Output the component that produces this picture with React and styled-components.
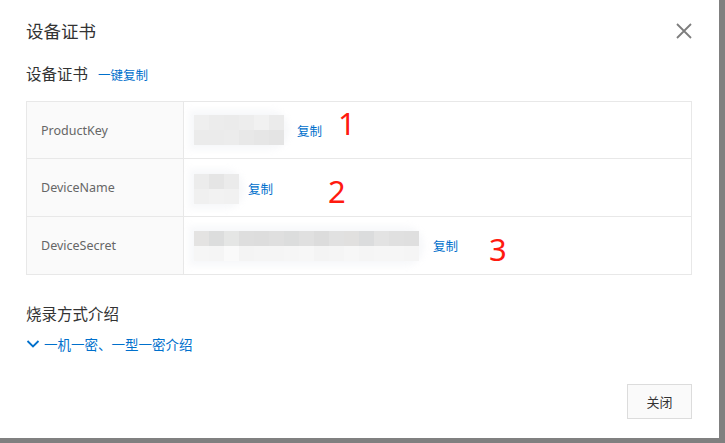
import React from "react";
import styled, { createGlobalStyle } from "styled-components";

const GlobalStyle = createGlobalStyle`
  html, body {
    margin: 0;
    padding: 0;
    background: #808080;
  }
  body {
    font-family: "Noto Sans", "Noto Sans CJK SC", sans-serif;
  }
`;

const Dialog = styled.div`
  width: 719px;
  height: 438px;
  background: #fff;
  box-sizing: border-box;
  padding: 0 27px 19px 26px;
  display: flex;
  flex-direction: column;
`;

const Header = styled.div`
  height: 62px;
  display: flex;
  align-items: center;
  justify-content: space-between;
`;

const Title = styled.div`
  font-family: "Noto Sans CJK SC", sans-serif;
  font-size: 17.5px;
  color: #333;
  line-height: 24px;
`;

const CloseIcon = styled.button`
  width: 18px;
  height: 18px;
  padding: 0;
  margin-right: -1px;
  border: none;
  background: transparent;
  display: flex;
  cursor: pointer;
`;

const SectionRow = styled.div`
  display: flex;
  align-items: baseline;
  gap: 10px;
  height: 22px;
  margin-top: ${(p) => p.top || 0}px;
`;

const SectionTitle = styled.div`
  font-family: "Noto Sans CJK SC", sans-serif;
  font-size: 15.5px;
  line-height: 22px;
  color: #333;
`;

const Link = styled.a`
  font-family: "Noto Sans CJK SC", sans-serif;
  font-size: ${(p) => p.size || 12}px;
  color: #0070cc;
  text-decoration: none;
  cursor: pointer;
  display: inline-flex;
  align-items: center;
  gap: 4px;
`;

const Table = styled.div`
  margin-top: 17px;
  border: 1px solid #e8e8e8;
`;

const Row = styled.div`
  display: flex;
  height: ${(p) => p.h}px;
  & + & {
    border-top: 1px solid #e8e8e8;
  }
`;

const Label = styled.div`
  width: 142px;
  flex-shrink: 0;
  background: #fafafa;
  border-right: 1px solid #e8e8e8;
  display: flex;
  align-items: center;
  padding-left: 14px;
  font-size: 12.5px;
  color: #666;
`;

const Value = styled.div`
  flex: 1;
  display: flex;
  align-items: center;
  padding-left: 10px;
`;

const Mosaic = styled.div`
  display: grid;
  grid-template-columns: repeat(${(p) => p.cols}, 15px);
  grid-auto-rows: 15px;
  margin-top: ${(p) => p.shift || 0}px;
  border-radius: 0 14px 14px 0;
  box-shadow: 0 0 6px 5px rgba(246, 247, 250, 0.9);
`;

const Block = styled.div`
  background: ${(p) => p.shade};
`;

const CopyLink = styled(Link)`
  font-size: 12.5px;
  margin-left: ${(p) => p.gap}px;
  margin-top: ${(p) => p.shift || 0}px;
`;

const Mark = styled.span`
  font-family: "Noto Sans", sans-serif;
  font-size: 31px;
  line-height: 1;
  color: #ff1a0f;
  margin-left: ${(p) => p.gap}px;
  transform: translateY(${(p) => p.dy}px);
`;

const Footer = styled.div`
  margin-top: auto;
  display: flex;
  justify-content: flex-end;
`;

const CloseButton = styled.button`
  width: 65px;
  height: 35px;
  background: #fafafa;
  border: 1px solid #dcdcdc;
  font-family: "Noto Sans CJK SC", sans-serif;
  font-size: 13px;
  color: #333;
  cursor: pointer;
`;

const rows = [
  {
    label: "ProductKey",
    height: 56,
    cols: 6,
    shades: [
      "#efefef", "#ececec", "#ebebeb", "#ededed", "#f1f1f1", "#ebebeb",
      "#ebebeb", "#ebebeb", "#ececec", "#e8e8e8", "#e6e6e6", "#e4e4e4",
    ],
    copyGap: 13,
    mark: "1",
    markGap: 16,
    markDy: -7,
  },
  {
    label: "DeviceName",
    height: 57,
    cols: 3,
    shades: ["#ececec", "#e5e5e5", "#ebebeb", "#f0f0f0", "#f2f2f2", "#f1f1f1"],
    copyGap: 9,
    mark: "2",
    markGap: 55,
    markDy: 4,
    shift: 2,
  },
  {
    label: "DeviceSecret",
    height: 57,
    cols: 15,
    shades: [
      "#e4e3e2", "#dcdddd", "#e5e6e5", "#dedede", "#dddddd", "#dfdfdf",
      "#dcdddd", "#e0e0e0", "#dcdcdc", "#e1e1e1", "#e1e0df", "#dbdcdd",
      "#e3e3e3", "#e0e0e0", "#dfdfdf",
      "#f6f6f6", "#f5f5f5", "#fafafa", "#f4f4f4", "#f5f5f5", "#f5f5f5",
      "#f6f6f6", "#f7f7f7", "#f4f4f4", "#f5f5f5", "#f7f7f7", "#f5f5f5",
      "#f6f6f6", "#f6f6f6", "#f5f5f5",
    ],
    copyGap: 14,
    mark: "3",
    markGap: 31,
    markDy: 4,
  },
];

function App() {
  return (
    <>
      <GlobalStyle />
      <Dialog>
        <Header>
          <Title>设备证书</Title>
          <CloseIcon aria-label="close">
            <svg width="18" height="18" viewBox="0 0 18 18">
              <path
                d="M2 2 L16 16 M16 2 L2 16"
                stroke="#7d7d7d"
                strokeWidth="1.8"
                fill="none"
              />
            </svg>
          </CloseIcon>
        </Header>

        <SectionRow>
          <SectionTitle>设备证书</SectionTitle>
          <Link size={12.5}>一键复制</Link>
        </SectionRow>

        <Table>
          {rows.map((row) => (
            <Row key={row.label} h={row.height}>
              <Label>{row.label}</Label>
              <Value>
                <Mosaic cols={row.cols} shift={row.shift}>
                  {row.shades.map((shade, i) => (
                    <Block key={i} shade={shade} />
                  ))}
                </Mosaic>
                <CopyLink gap={row.copyGap} shift={row.shift}>
                  复制
                </CopyLink>
                <Mark gap={row.markGap} dy={row.markDy}>
                  {row.mark}
                </Mark>
              </Value>
            </Row>
          ))}
        </Table>

        <SectionRow top={27}>
          <SectionTitle>烧录方式介绍</SectionTitle>
        </SectionRow>
        <SectionRow top={10}>
          <Link size={13.5}>
            <svg width="14" height="10" viewBox="0 0 14 10">
              <path
                d="M1.5 2 L7 7.5 L12.5 2"
                stroke="#0070cc"
                strokeWidth="1.8"
                fill="none"
              />
            </svg>
            一机一密、一型一密介绍
          </Link>
        </SectionRow>

        <Footer>
          <CloseButton>关闭</CloseButton>
        </Footer>
      </Dialog>
    </>
  );
}

export default App;
